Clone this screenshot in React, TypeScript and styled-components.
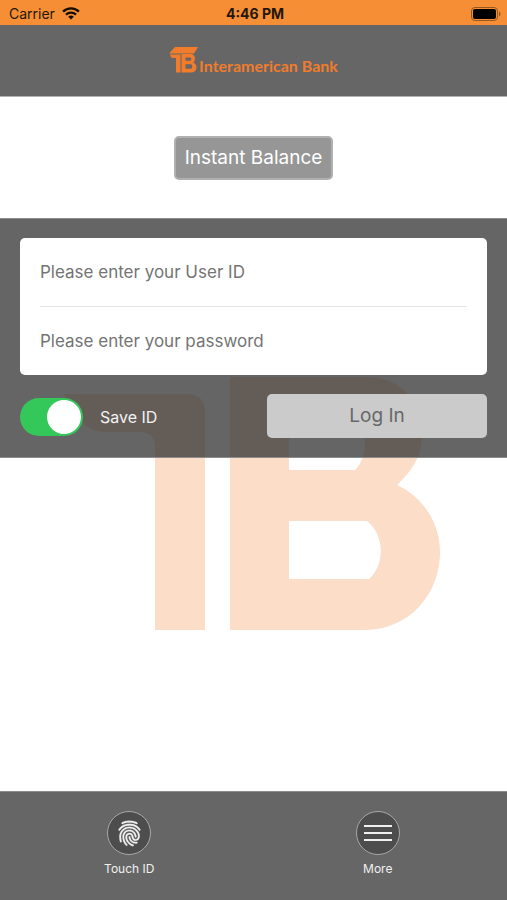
import React, { useState } from "react";
import styled, { createGlobalStyle } from "styled-components";
import { IoFingerPrint } from "react-icons/io5";

const GlobalStyle = createGlobalStyle`
  *, *::before, *::after { box-sizing: border-box; }
  body { margin: 0; background: #fff; }
  body, button, input { font-family: Inter, "Liberation Sans", sans-serif; }
`;

const Screen = styled.div`
  display: flex;
  flex-direction: column;
  min-height: 100vh;
  background: #fff;
`;

const StatusBar = styled.div`
  display: grid;
  grid-template-columns: 1fr auto 1fr;
  align-items: center;
  height: 25px;
  padding: 2px 6px 0 9px;
  background: #f58e35;
  color: #24160a;
  font-size: 14px;
  line-height: 20px;
`;

const Carrier = styled.span`
  display: flex;
  align-items: center;
  gap: 7px;
`;

const Clock = styled.time`
  font-weight: 700;
`;

const BatteryIcon = styled.svg`
  justify-self: end;
`;

const Header = styled.header`
  display: flex;
  justify-content: center;
  height: 71px;
  padding-top: 20px;
  background: #666;
`;

const Brand = styled.h1`
  display: flex;
  align-items: flex-start;
  gap: 1px;
  margin: 0;
  color: #f07c2c;
  font-family: Lato, "Liberation Sans", sans-serif;
  font-size: 16px;
  font-weight: 700;
  line-height: 20px;
`;

const BrandName = styled.span`
  padding-top: 11px;
`;

const BalanceSection = styled.section`
  display: flex;
  justify-content: center;
  align-items: center;
  height: 122px;
  border-top: 1px solid #b4b4b4;
`;

const Button = styled.button`
  border-radius: 5px;
  font-size: 19px;
  line-height: 22px;
  cursor: pointer;
`;

const BalanceButton = styled(Button)`
  height: 44px;
  padding: 0 9px;
  border: 2px solid #b0b0b0;
  background: #969696;
  color: #fff;
`;

const Main = styled.main`
  position: relative;
  flex: 1;
`;

const Watermark = styled.svg`
  position: absolute;
  top: 159px;
  left: 0;
  right: 0;
  margin: 0 auto;
`;

const LoginPanel = styled.form`
  position: relative;
  display: flex;
  flex-direction: column;
  gap: 19px;
  padding: 19px 20px;
  border-top: 1px solid #8c8c8c;
  border-bottom: 1px solid #8c8c8c;
  background: rgba(50, 50, 50, 0.75);
  background-clip: padding-box;
`;

const Fields = styled.div`
  padding: 0 20px;
  border-radius: 5px;
  background: #fff;
`;

const Field = styled.input`
  display: block;
  width: 100%;
  height: 68px;
  padding: 0;
  border: 0;
  border-radius: 0;
  outline: 0;
  background: transparent;
  color: #333;
  font-size: 17px;

  & + & {
    height: 69px;
    border-top: 1px solid #e4e4e4;
  }
  &::placeholder {
    color: #747474;
    opacity: 1;
  }
`;

const Actions = styled.div`
  display: grid;
  grid-template-columns: 1fr 1fr;
  gap: 27px;
  align-items: end;
`;

const SaveLabel = styled.label`
  display: flex;
  align-items: center;
  gap: 17px;
  padding-bottom: 2px;
  color: #f2f2f2;
  font-size: 16px;
  line-height: 20px;
`;

const Toggle = styled.input`
  appearance: none;
  display: flex;
  width: 63px;
  height: 38px;
  margin: 0;
  padding: 2px;
  border-radius: 19px;
  background: #8e8e93;
  cursor: pointer;

  &::before {
    content: "";
    width: 34px;
    height: 34px;
    border-radius: 50%;
    background: #fff;
  }
  &:checked {
    justify-content: flex-end;
    background: #34c759;
  }
`;

const LoginButton = styled(Button)`
  height: 44px;
  border: 0;
  background: #cbcbcb;
  color: #686868;
`;

const TabBar = styled.nav`
  display: grid;
  grid-template-columns: 1fr 1fr;
  height: 109px;
  padding: 19px 5px 0;
  border-top: 1px solid #8c8c8c;
  background: #666;
`;

const Tab = styled.button`
  display: flex;
  flex-direction: column;
  align-items: center;
  gap: 6px;
  padding: 0;
  border: 0;
  background: none;
  color: #f0f0f0;
  font-size: 12px;
  line-height: 16px;
  cursor: pointer;
`;

const TabIcon = styled.span`
  display: flex;
  justify-content: center;
  align-items: center;
  width: 44px;
  height: 44px;
  border: 1px solid #a8a8a8;
  border-radius: 50%;
  background: #4d4d4d;
`;

function WifiGlyph() {
  return (
    <svg width="18" height="13" viewBox="0 0 18 13" fill="none" stroke="#160d05" aria-hidden="true">
      <path d="M1.1 4.6a11.2 11.2 0 0 1 15.8 0" strokeWidth="2.4" />
      <path d="M4 7.6a7.1 7.1 0 0 1 10 0" strokeWidth="2.2" />
      <path d="M9 12.6 6.2 9.8a4 4 0 0 1 5.6 0Z" fill="#160d05" stroke="none" />
    </svg>
  );
}

function BatteryGlyph() {
  return (
    <BatteryIcon width="30" height="14" viewBox="0 0 30 14" aria-hidden="true">
      <rect x="0.5" y="0.5" width="26" height="13" rx="3.5" fill="none" stroke="#96571f" />
      <rect x="2" y="2" width="23" height="10" rx="2" fill="#000" />
      <path d="M28 4.5c2 .8 2 4.2 0 5Z" fill="#96571f" />
    </BatteryIcon>
  );
}

function BrandMark() {
  return (
    <svg width="29" height="29" viewBox="0 0 29 29" fill="currentColor" aria-hidden="true">
      <path d="M6 2H29L25 8.500H0Z" />
      <path d="M1 9.500H11.500V27.500H7V13H4Q1.500 13 1 9.500Z" />
      <path
        fillRule="evenodd"
        d="M12.500 9H22Q26 9.500 26 13.500Q26 16.500 24.300 17.500Q27.500 19 27.500 22.500Q27 27.500 22 27.500H12.500ZM16.500 12.500V15.800H21.500Q23.300 14 21.500 12.500ZM16.500 19.300V23.800H22.300Q24.300 21.500 22.300 19.300Z"
      />
    </svg>
  );
}

function WatermarkMark() {
  return (
    <Watermark width="381" height="253" viewBox="0 0 381 253" fill="#fbddc8" aria-hidden="true">
      <path d="M0 17H124Q142 17 142 36V253H92V70Q92 55 77 55H42Q26 55 18 43Z" />
      <path
        fillRule="evenodd"
        d="M167 0H304C336 0 359 22 359 58C359 80 348 95 334 108C360 120 377 146 377 175C377 218 345 253 302 253H167ZM226 50V93H292C300 85 304 72 301 58Q299 50 291 50ZM226 144V202H306C322 188 322 158 304 144Z"
      />
    </Watermark>
  );
}

export default function App() {
  const [saveId, setSaveId] = useState(true);

  return (
    <>
      <GlobalStyle />
      <Screen>
        <StatusBar>
          <Carrier>
            Carrier
            <WifiGlyph />
          </Carrier>
          <Clock>4:46 PM</Clock>
          <BatteryGlyph />
        </StatusBar>
        <Header>
          <Brand>
            <BrandMark />
            <BrandName>Interamerican Bank</BrandName>
          </Brand>
        </Header>
        <BalanceSection>
          <BalanceButton type="button">Instant Balance</BalanceButton>
        </BalanceSection>
        <Main>
          <WatermarkMark />
          <LoginPanel onSubmit={(event) => event.preventDefault()}>
            <Fields>
              <Field type="text" aria-label="User ID" placeholder="Please enter your User ID" />
              <Field type="password" aria-label="Password" placeholder="Please enter your password" />
            </Fields>
            <Actions>
              <SaveLabel>
                <Toggle
                  type="checkbox"
                  role="switch"
                  checked={saveId}
                  onChange={(event) => setSaveId(event.target.checked)}
                />
                Save ID
              </SaveLabel>
              <LoginButton type="submit">Log In</LoginButton>
            </Actions>
          </LoginPanel>
        </Main>
        <TabBar>
          <Tab type="button">
            <TabIcon>
              <IoFingerPrint size={27} stroke="#f0f0f0" strokeWidth={6} />
            </TabIcon>
            Touch ID
          </Tab>
          <Tab type="button">
            <TabIcon>
              <svg width="28" height="18" viewBox="0 0 28 18" stroke="#f0f0f0" strokeWidth="2" aria-hidden="true">
                <path d="M0 2H28M0 9H28M0 16H28" />
              </svg>
            </TabIcon>
            More
          </Tab>
        </TabBar>
      </Screen>
    </>
  );
}
